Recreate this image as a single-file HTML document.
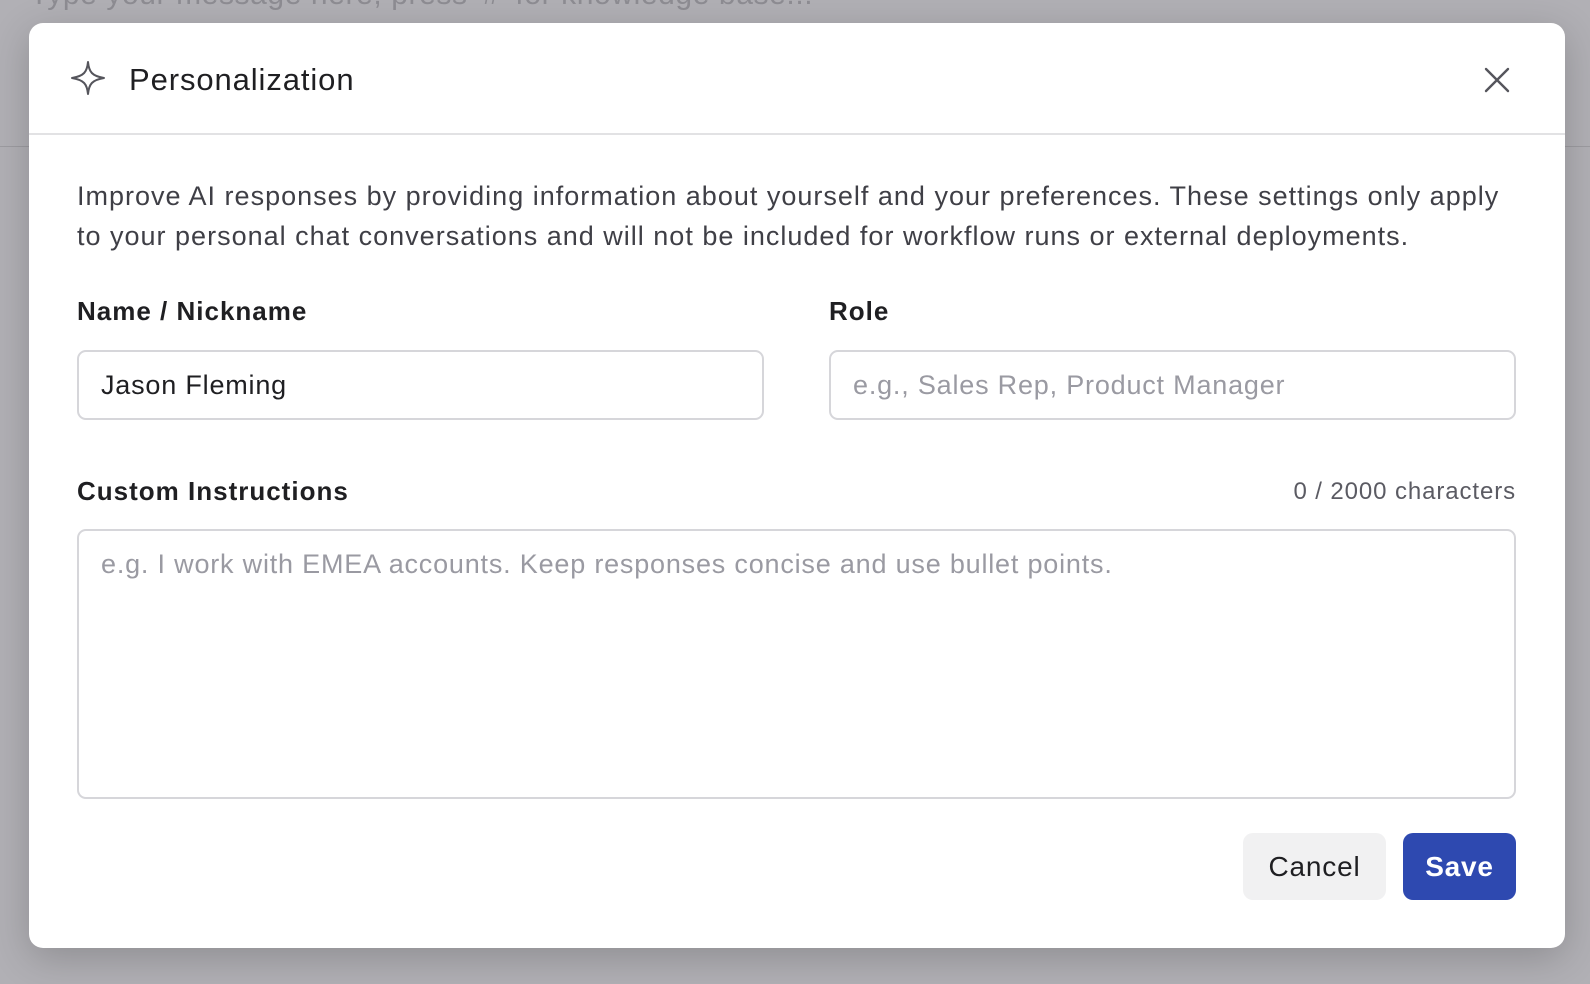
<!DOCTYPE html>
<html><head><meta charset="utf-8"><style>
*{box-sizing:border-box;margin:0;padding:0}
body{width:1590px;height:984px;background:#b1b0b5;font-family:"Liberation Sans",sans-serif;position:relative;overflow:hidden}
.bgtext{position:absolute;left:30px;top:-22px;font-size:30px;color:#8e8d93;letter-spacing:.6px}
.bgline{position:absolute;left:0;right:0;top:146px;height:1px;background:#9d9ca1}
.dlg{position:absolute;left:29px;top:23px;width:1536px;height:925px;background:#fff;border-radius:14px;box-shadow:0 10px 40px rgba(0,0,0,.2)}
.hdr{height:112px;border-bottom:2px solid #e2e2e4;position:relative}
.title{position:absolute;left:100px;top:39px;font-size:31px;color:#1f1f22;letter-spacing:.9px}
.x{position:absolute;left:1454px;top:43px}
.star{position:absolute;left:41px;top:37px}
.desc{position:absolute;left:48px;top:153px;width:1480px;font-size:27px;line-height:40px;color:#3f3f46;letter-spacing:1px;white-space:nowrap}
.lbl{position:absolute;font-size:26px;font-weight:bold;color:#1f1f22;letter-spacing:1px}
.inp{position:absolute;border:2px solid #d6d6da;border-radius:9px;font-size:27px;padding-left:22px;display:flex;align-items:center;color:#1f1f22;letter-spacing:.8px}
.ph{color:#9a9aa2}
.cnt{position:absolute;right:49px;top:455px;font-size:24px;color:#5b5b63;letter-spacing:.9px}
.btn{position:absolute;top:810px;height:67px;border-radius:10px;font-size:28px;display:flex;align-items:center;justify-content:center;letter-spacing:.8px}
</style></head><body>
<div class="bgtext">Type your message here, press '#' for knowledge base...</div>
<div class="bgline"></div>
<div class="dlg">
 <div class="hdr">
  <svg class="star" width="36" height="36" viewBox="0 0 36 36"><path d="M18 2 C19 12 22 16 34 18 C22 20 19 24 18 34 C17 24 14 20 2 18 C14 16 17 12 18 2Z" fill="none" stroke="#55555c" stroke-width="2" stroke-linejoin="round"/></svg>
  <div class="title">Personalization</div>
  <svg class="x" width="28" height="28" viewBox="0 0 28 28"><path d="M3 3L25 25M25 3L3 25" stroke="#55555c" stroke-width="2.4" stroke-linecap="round"/></svg>
 </div>
 <div class="desc">Improve AI responses by providing information about yourself and your preferences. These settings only apply<br>to your personal chat conversations and will not be included for workflow runs or external deployments.</div>
 <div class="lbl" style="left:48px;top:273px">Name / Nickname</div>
 <div class="lbl" style="left:800px;top:273px">Role</div>
 <div class="inp" style="left:48px;top:327px;width:687px;height:70px">Jason Fleming</div>
 <div class="inp ph" style="left:800px;top:327px;width:687px;height:70px">e.g., Sales Rep, Product Manager</div>
 <div class="lbl" style="left:48px;top:453px">Custom Instructions</div>
 <div class="cnt">0 / 2000 characters</div>
 <div class="inp ph" style="left:48px;top:506px;width:1439px;height:270px;align-items:flex-start;padding-top:18px">e.g. I work with EMEA accounts. Keep responses concise and use bullet points.</div>
 <div class="btn" style="left:1214px;width:143px;background:#f1f1f2;color:#1f1f22">Cancel</div>
 <div class="btn" style="left:1374px;width:113px;background:#2e49b0;color:#fff;font-weight:bold">Save</div>
</div>
</body></html>
